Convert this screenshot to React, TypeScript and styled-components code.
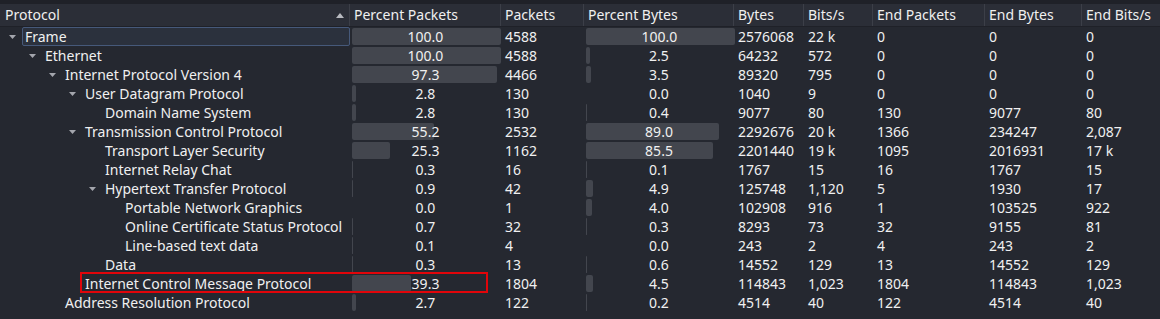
import React from 'react';
import styled, { createGlobalStyle } from 'styled-components';

const GlobalStyle = createGlobalStyle`
  html, body {
    margin: 0;
    padding: 0;
    background: #252830;
  }
  body {
    font-family: "Noto Sans", "Open Sans", sans-serif;
    font-size: 14px;
    color: #f0f0f0;
  }
`;

const COLUMNS = '350px 151px 83px 150px 70px 69px 112px 97px 78px';
const BAR_SCALE = 1.49;

type Proto = {
  name: string;
  level: number;
  open?: boolean;
  selected?: boolean;
  marked?: boolean;
  pctPackets: number;
  packets: string;
  pctBytes: number;
  bytes: string;
  bits: string;
  endPackets: string;
  endBytes: string;
  endBits: string;
};

const rows: Proto[] = [
  { name: 'Frame', level: 0, open: true, selected: true, pctPackets: 100.0, packets: '4588', pctBytes: 100.0, bytes: '2576068', bits: '22 k', endPackets: '0', endBytes: '0', endBits: '0' },
  { name: 'Ethernet', level: 1, open: true, pctPackets: 100.0, packets: '4588', pctBytes: 2.5, bytes: '64232', bits: '572', endPackets: '0', endBytes: '0', endBits: '0' },
  { name: 'Internet Protocol Version 4', level: 2, open: true, pctPackets: 97.3, packets: '4466', pctBytes: 3.5, bytes: '89320', bits: '795', endPackets: '0', endBytes: '0', endBits: '0' },
  { name: 'User Datagram Protocol', level: 3, open: true, pctPackets: 2.8, packets: '130', pctBytes: 0.0, bytes: '1040', bits: '9', endPackets: '0', endBytes: '0', endBits: '0' },
  { name: 'Domain Name System', level: 4, pctPackets: 2.8, packets: '130', pctBytes: 0.4, bytes: '9077', bits: '80', endPackets: '130', endBytes: '9077', endBits: '80' },
  { name: 'Transmission Control Protocol', level: 3, open: true, pctPackets: 55.2, packets: '2532', pctBytes: 89.0, bytes: '2292676', bits: '20 k', endPackets: '1366', endBytes: '234247', endBits: '2,087' },
  { name: 'Transport Layer Security', level: 4, pctPackets: 25.3, packets: '1162', pctBytes: 85.5, bytes: '2201440', bits: '19 k', endPackets: '1095', endBytes: '2016931', endBits: '17 k' },
  { name: 'Internet Relay Chat', level: 4, pctPackets: 0.3, packets: '16', pctBytes: 0.1, bytes: '1767', bits: '15', endPackets: '16', endBytes: '1767', endBits: '15' },
  { name: 'Hypertext Transfer Protocol', level: 4, open: true, pctPackets: 0.9, packets: '42', pctBytes: 4.9, bytes: '125748', bits: '1,120', endPackets: '5', endBytes: '1930', endBits: '17' },
  { name: 'Portable Network Graphics', level: 5, pctPackets: 0.0, packets: '1', pctBytes: 4.0, bytes: '102908', bits: '916', endPackets: '1', endBytes: '103525', endBits: '922' },
  { name: 'Online Certificate Status Protocol', level: 5, pctPackets: 0.7, packets: '32', pctBytes: 0.3, bytes: '8293', bits: '73', endPackets: '32', endBytes: '9155', endBits: '81' },
  { name: 'Line-based text data', level: 5, pctPackets: 0.1, packets: '4', pctBytes: 0.0, bytes: '243', bits: '2', endPackets: '4', endBytes: '243', endBits: '2' },
  { name: 'Data', level: 4, pctPackets: 0.3, packets: '13', pctBytes: 0.6, bytes: '14552', bits: '129', endPackets: '13', endBytes: '14552', endBits: '129' },
  { name: 'Internet Control Message Protocol', level: 3, marked: true, pctPackets: 39.3, packets: '1804', pctBytes: 4.5, bytes: '114843', bits: '1,023', endPackets: '1804', endBytes: '114843', endBits: '1,023' },
  { name: 'Address Resolution Protocol', level: 2, pctPackets: 2.7, packets: '122', pctBytes: 0.2, bytes: '4514', bits: '40', endPackets: '122', endBytes: '4514', endBits: '40' },
];

const headers = ['Protocol', 'Percent Packets', 'Packets', 'Percent Bytes', 'Bytes', 'Bits/s', 'End Packets', 'End Bytes', 'End Bits/s'];

// Styled components
const Page = styled.div`
  width: 1160px;
  height: 319px;
  padding-top: 4px;
  box-sizing: border-box;
  background: #252830;
  overflow: hidden;
  box-shadow: inset 0 4px 0 #1f2128;
`;

const HeaderRow = styled.div`
  display: grid;
  grid-template-columns: ${COLUMNS};
  height: 22px;
  background: #2b2e37;
  border-bottom: 1px solid #1f2128;
`;

const HeaderCell = styled.div`
  display: flex;
  align-items: center;
  justify-content: space-between;
  padding: 0 5px 0 4px;
  border-right: 1px solid #3c3f48;
  white-space: nowrap;
  line-height: 22px;

  &:first-child {
    padding-left: 5px;
  }

  &:last-child {
    border-right: none;
  }
`;

const Row = styled.div`
  position: relative;
  display: grid;
  grid-template-columns: ${COLUMNS};
  height: 19px;
  line-height: 19px;
`;

const ProtoCell = styled.div<{ $level: number }>`
  display: flex;
  align-items: center;
  padding-left: ${p => 5 + p.$level * 20}px;
  white-space: nowrap;
`;

const Toggle = styled.span`
  display: flex;
  align-items: center;
  width: 17px;
  flex: none;
  padding-left: 4px;
  box-sizing: border-box;
`;

const Name = styled.span<{ $selected?: boolean }>`
  flex: 1;
  height: 17px;
  line-height: 17px;
  padding-left: 2px;
  border: 1px solid ${p => (p.$selected ? '#46597a' : 'transparent')};
  background: ${p => (p.$selected ? '#2b313d' : 'transparent')};
  border-radius: 2px;
`;

const BarCell = styled.div`
  display: grid;
  align-items: center;
  padding-left: 2px;
`;

const Bar = styled.div`
  grid-area: 1 / 1;
  height: 17px;
  background: #43464e;
  border-radius: 2px;
  justify-self: start;
`;

const BarValue = styled.span`
  grid-area: 1 / 1;
  text-align: center;
  padding-right: 2px;
`;

const TextCell = styled.div`
  padding-left: 4px;
  white-space: nowrap;
`;

const Marker = styled.div`
  position: absolute;
  left: 80px;
  top: -2px;
  width: 408px;
  height: 21px;
  border: 2px solid #e1050a;
  box-sizing: border-box;
  pointer-events: none;
`;

const SortArrow = () => (
  <svg width="8" height="5" viewBox="0 0 8 5">
    <path d="M0 5 L4 0 L8 5 Z" fill="#b8bac0" />
  </svg>
);

const Expander = () => (
  <svg width="7" height="4" viewBox="0 0 7 4">
    <path d="M0 0 L7 0 L3.5 4 Z" fill="#a4a6ad" />
  </svg>
);

const PercentBar: React.FC<{ value: number }> = ({ value }) => (
  <BarCell>
    {value > 0 && <Bar style={{ width: Math.max(1, value * BAR_SCALE) }} />}
    <BarValue>{value.toFixed(1)}</BarValue>
  </BarCell>
);

const App: React.FC = () => (
  <>
    <GlobalStyle />
    <Page>
      <HeaderRow>
        {headers.map((h, i) => (
          <HeaderCell key={h}>
            <span>{h}</span>
            {i === 0 && <SortArrow />}
          </HeaderCell>
        ))}
      </HeaderRow>
      {rows.map(r => (
        <Row key={r.name}>
          <ProtoCell $level={r.level}>
            <Toggle>{r.open && <Expander />}</Toggle>
            <Name $selected={r.selected}>{r.name}</Name>
          </ProtoCell>
          <PercentBar value={r.pctPackets} />
          <TextCell>{r.packets}</TextCell>
          <PercentBar value={r.pctBytes} />
          <TextCell>{r.bytes}</TextCell>
          <TextCell>{r.bits}</TextCell>
          <TextCell>{r.endPackets}</TextCell>
          <TextCell>{r.endBytes}</TextCell>
          <TextCell>{r.endBits}</TextCell>
          {r.marked && <Marker />}
        </Row>
      ))}
    </Page>
  </>
);

export default App;
